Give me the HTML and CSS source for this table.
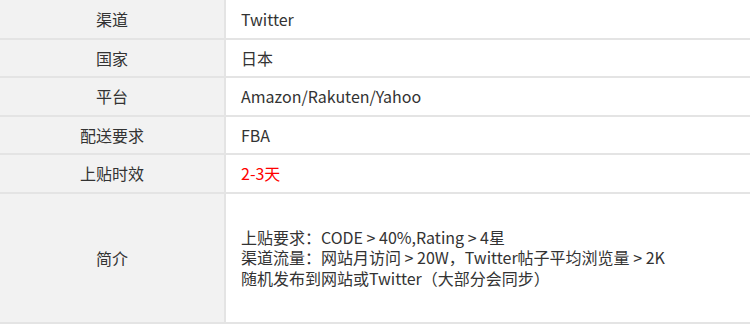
FILE: index.html
```html
<!DOCTYPE html>
<html lang="zh-CN">
<head>
<meta charset="utf-8">
<link rel="stylesheet" href="styles.css">
</head>
<body>
<table class="info">
  <tbody>
    <tr class="row"><th class="label">渠道</th><td class="value">Twitter</td></tr>
    <tr class="row"><th class="label">国家</th><td class="value">日本</td></tr>
    <tr class="row"><th class="label">平台</th><td class="value">Amazon/Rakuten/Yahoo</td></tr>
    <tr class="row"><th class="label">配送要求</th><td class="value">FBA</td></tr>
    <tr class="row"><th class="label">上贴时效</th><td class="value red">2-3天</td></tr>
    <tr class="row tall"><th class="label">简介</th><td class="value multi">上贴要求：CODE &gt; 40%,Rating &gt; 4星<br>渠道流量：网站月访问 &gt; 20W，Twitter帖子平均浏览量 &gt; 2K<br>随机发布到网站或Twitter（大部分会同步）</td></tr>
  </tbody>
</table>
</body>
</html>
```

FILE: styles.css
```css
html, body {
  margin: 0;
  padding: 0;
  background: #fff;
}
body {
  font-family: "Noto Sans CJK SC", "Noto Sans", sans-serif;
  font-size: 16px;
  color: #333;
}
.info {
  width: 750px;
  border-collapse: collapse;
  table-layout: fixed;
}
.row {
  height: 38.5px;
}
.label {
  width: 224px;
  background: #f2f2f2;
  font-weight: normal;
  text-align: center;
  border-right: 2px solid #e4e4e4;
  border-bottom: 2px solid #e4e4e4;
  padding: 0;
  color: #333;
}
.value {
  padding: 0 15px;
  border-bottom: 2px solid #e4e4e4;
  text-align: left;
}
.red {
  color: #ff0000;
}
.tall {
  height: 130px;
}
.multi {
  line-height: 20.5px;
}
```
